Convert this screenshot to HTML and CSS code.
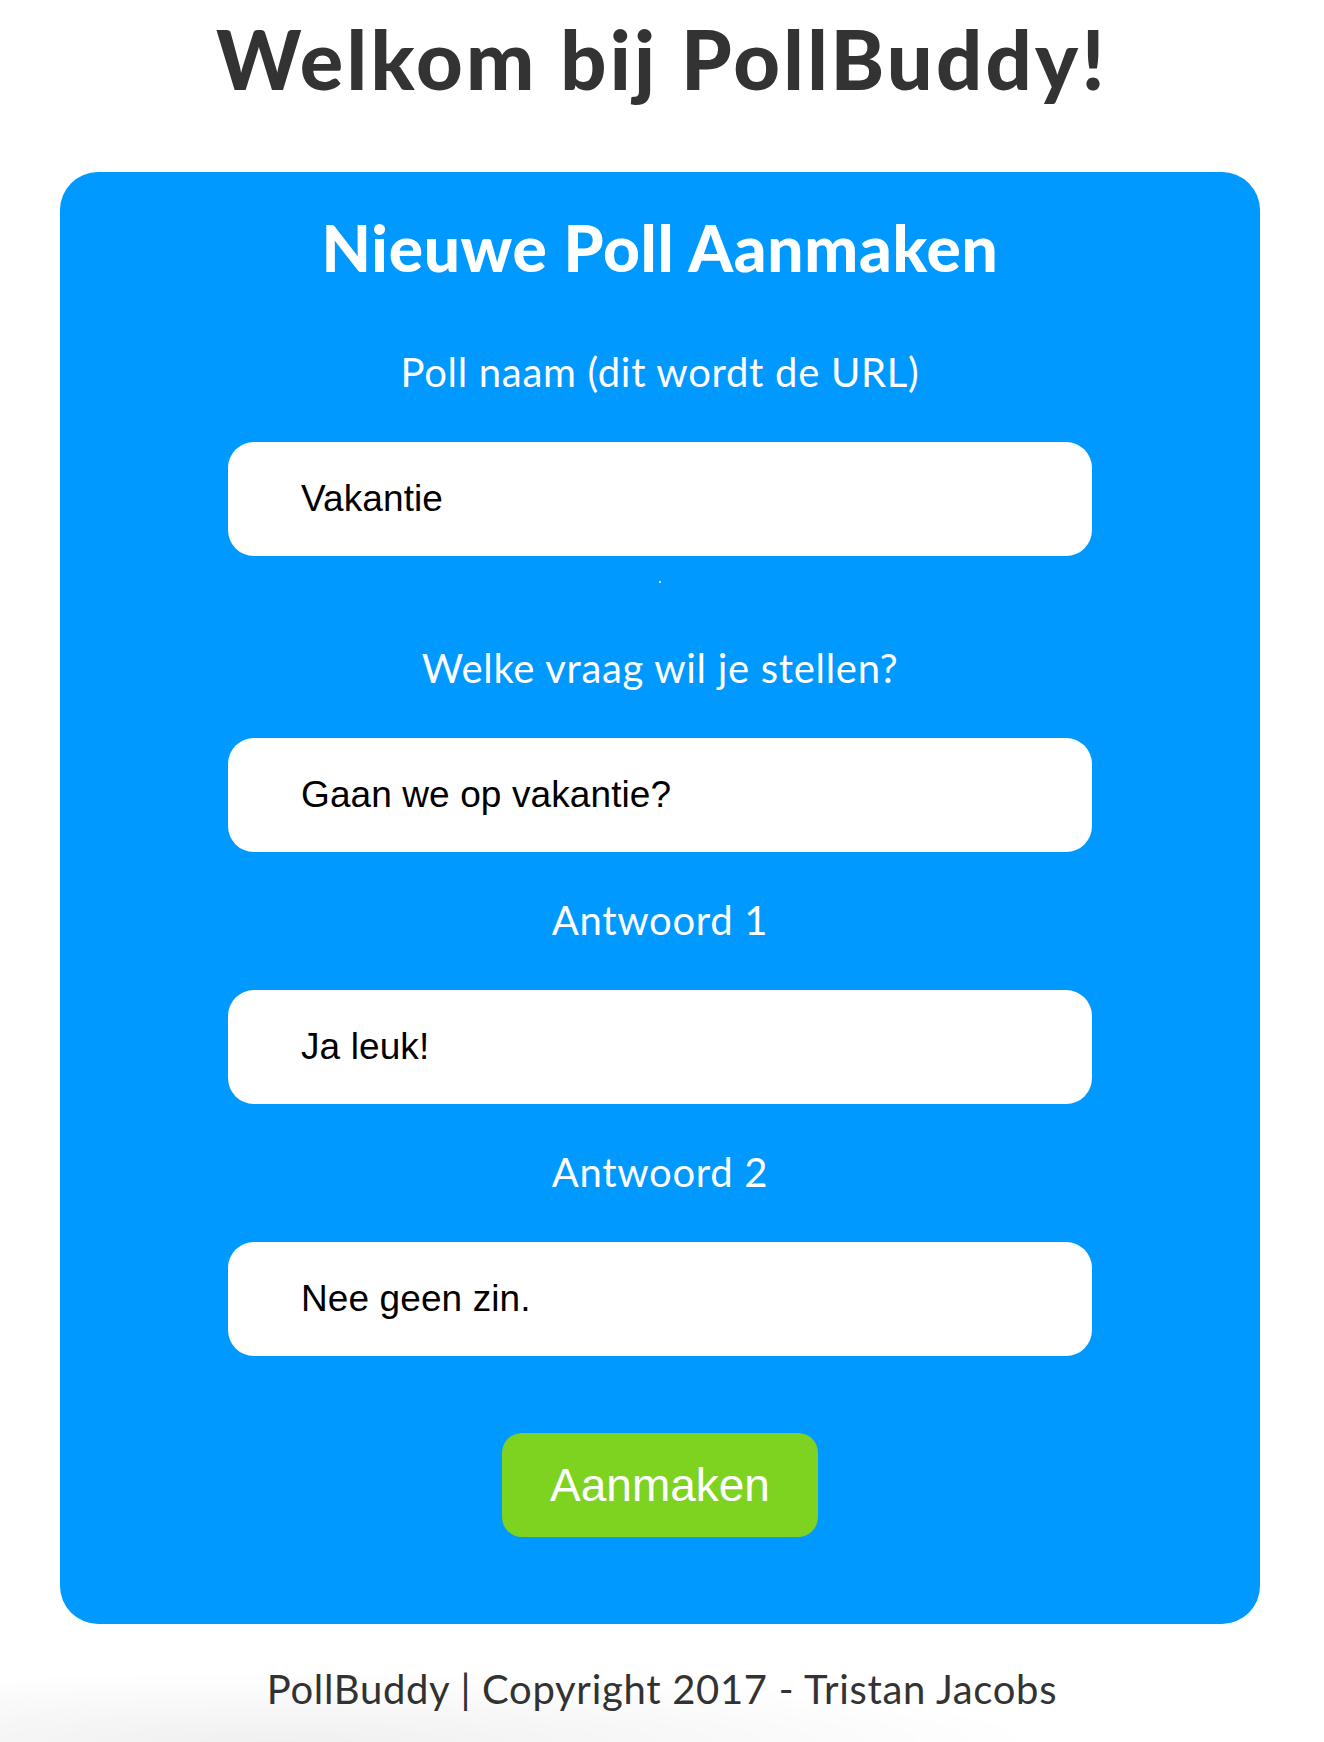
FILE: index.html
```html
<!DOCTYPE html>
<html lang="nl">
<head>
<meta charset="utf-8">
<title>PollBuddy</title>
<link rel="stylesheet" href="styles.css">
</head>
<body>
  <h1 class="page-title">Welkom bij PollBuddy!</h1>
  <main class="card">
    <h2 class="card-title">Nieuwe Poll Aanmaken</h2>
    <form class="poll-form">
      <label class="field-label" for="naam">Poll naam (dit wordt de URL)</label>
      <input class="field-input" id="naam" type="text" value="Vakantie">
      <div class="hint"><span class="hint-dot"></span></div>
      <label class="field-label" for="vraag">Welke vraag wil je stellen?</label>
      <input class="field-input" id="vraag" type="text" value="Gaan we op vakantie?">
      <label class="field-label" for="a1">Antwoord 1</label>
      <input class="field-input" id="a1" type="text" value="Ja leuk!">
      <label class="field-label" for="a2">Antwoord 2</label>
      <input class="field-input" id="a2" type="text" value="Nee geen zin.">
      <button class="submit" type="button">Aanmaken</button>
    </form>
  </main>
  <footer class="footer">PollBuddy | Copyright 2017 - Tristan Jacobs</footer>
  <div class="shade"></div>
</body>
</html>
```

FILE: styles.css
```css
html, body {
  margin: 0;
  padding: 0;
  background: #ffffff;
}

body {
  font-family: Lato, "Noto Sans", sans-serif;
  color: #333333;
  min-height: 1742px;
}

.page-title {
  margin: 19px 0 73px;
  font-family: Lato, sans-serif;
  font-weight: 900;
  font-size: 81px;
  line-height: 80px;
  letter-spacing: 3.3px;
  text-align: center;
  color: #333333;
}

.card {
  box-sizing: border-box;
  width: 1200px;
  margin-left: 60px;
  padding: 44px 0 87px;
  background: #0099ff;
  border-radius: 38px;
  display: flex;
  flex-direction: column;
  align-items: center;
}

.card-title {
  margin: 0 0 68px;
  font-family: Lato, sans-serif;
  font-weight: 900;
  font-size: 64px;
  line-height: 64px;
  letter-spacing: 0.7px;
  color: #ffffff;
  text-align: center;
}

.poll-form {
  display: flex;
  flex-direction: column;
  align-items: center;
  width: 100%;
}

.field-label {
  display: block;
  font-family: Lato, sans-serif;
  font-weight: 400;
  font-size: 40px;
  line-height: 48px;
  letter-spacing: 0.7px;
  color: #ffffff;
  text-align: center;
  margin-bottom: 46px;
}

.field-input {
  box-sizing: border-box;
  width: 864px;
  height: 114px;
  margin: 0 0 44px;
  padding: 0 0 0 73px;
  border: none;
  outline: none;
  border-radius: 26px;
  background: #ffffff;
  font-family: "Liberation Sans", Arial, sans-serif;
  font-size: 37px;
  letter-spacing: 0.1px;
  color: #000000;
}

.hint {
  height: 44px;
  margin-top: -44px;
  margin-bottom: 44px;
  width: 100%;
  display: flex;
  justify-content: center;
  padding-top: 25px;
  box-sizing: border-box;
}

.hint-dot {
  display: block;
  width: 2px;
  height: 2px;
  background: #cfd8e0;
}

.submit {
  margin-top: 33px;
  width: 316px;
  height: 104px;
  border: none;
  border-radius: 20px;
  background: #7ed321;
  color: #ffffff;
  font-family: "Liberation Sans", Arial, sans-serif;
  font-size: 46px;
  padding: 0;
  cursor: pointer;
}

.footer {
  margin-top: 41px;
  font-family: Lato, sans-serif;
  font-size: 40px;
  line-height: 48px;
  letter-spacing: 0.7px;
  text-align: center;
  color: #333333;
}

.shade {
  position: fixed;
  left: 0;
  bottom: 0;
  width: 1100px;
  height: 70px;
  pointer-events: none;
  background: radial-gradient(ellipse 70% 100% at 25% 100%, rgba(0, 0, 0, 0.06), rgba(0, 0, 0, 0) 100%);
}
```
